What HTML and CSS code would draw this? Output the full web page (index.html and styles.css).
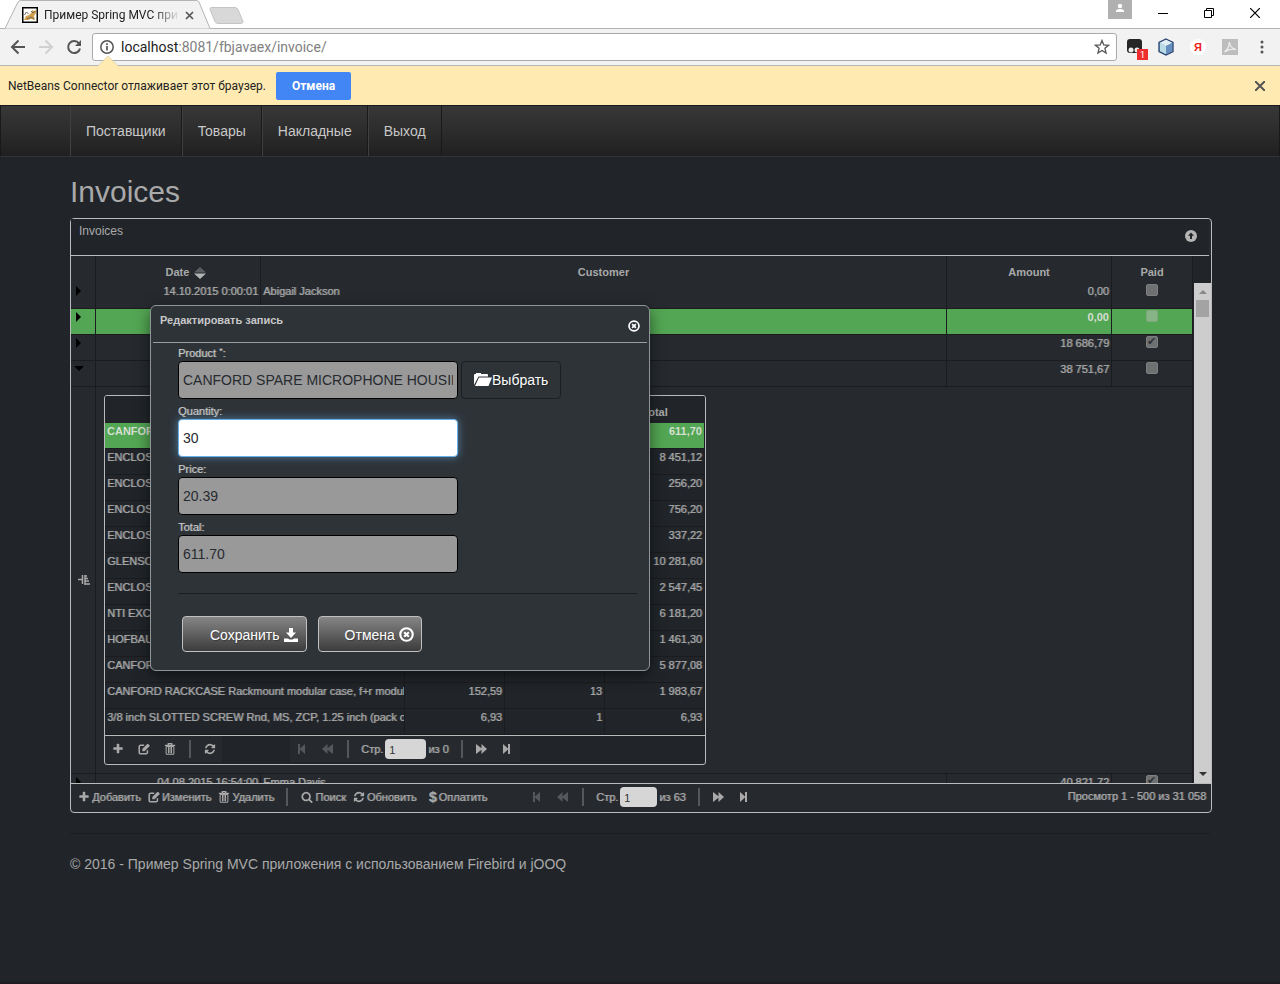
FILE: index.html
```html
<!DOCTYPE html>
<html lang="ru">
<head>
<meta charset="utf-8">
<title>Пример Spring MVC приложения</title>
<link rel="stylesheet" href="styles.css">
</head>
<body>
<svg class="defs" aria-hidden="true">
  <symbol id="plus" viewBox="0 0 1792 1792"><path d="M1600 736v192q0 40-28 68t-68 28h-416v416q0 40-28 68t-68 28h-192q-40 0-68-28t-28-68v-416h-416q-40 0-68-28t-28-68v-192q0-40 28-68t68-28h416v-416q0-40 28-68t68-28h192q40 0 68 28t28 68v416h416q40 0 68 28t28 68z"/></symbol>
  <symbol id="edit" viewBox="0 0 14 14"><path d="M11 8.500V11a1.600 1.600 0 0 1-1.600 1.600H3A1.600 1.600 0 0 1 1.400 11V4.300A1.600 1.600 0 0 1 3 2.700h4.200" fill="none" stroke="currentColor" stroke-width="1.800"/><path d="M5 9.600V7l5.800-5.800a.8.8 0 0 1 1.100 0l1.500 1.500a.8.8 0 0 1 0 1.100L7.600 9.600z"/></symbol>
  <symbol id="trash" viewBox="0 0 14 14"><path d="M5 2V.8h4V2M1 2.700h12" fill="none" stroke="currentColor" stroke-width="1.500"/><path d="M2.500 4v8.200q0 1 1 1h7q1 0 1-1V4M5.200 4.500V12M7 4.500V12M8.800 4.500V12M2.500 4.200h9" fill="none" stroke="currentColor" stroke-width="1.200"/></symbol>
  <symbol id="refresh" viewBox="0 0 1792 1792"><path d="M1639 1056q0 5-1 7-64 268-268 434.500t-478 166.500q-146 0-282.500-55t-243.500-157l-129 129q-19 19-45 19t-45-19-19-45v-448q0-26 19-45t45-19h448q26 0 45 19t19 45-19 45l-137 137q71 66 161 102t187 36q134 0 250-65t186-179q11-17 53-117 8-23 30-23h192q13 0 22.500 9.500t9.500 22.500zm25-800v448q0 26-19 45t-45 19h-448q-26 0-45-19t-19-45 19-45l138-138q-148-137-349-137-134 0-250 65t-186 179q-11 17-53 117-8 23-30 23h-199q-13 0-22.500-9.500t-9.500-22.500v-7q65-268 270-434.500t480-166.500q146 0 284 55.500t245 156.500l130-129q19-19 45-19t45 19 19 45z"/></symbol>
  <symbol id="search" viewBox="0 0 1792 1792"><path d="M1216 832q0-185-131.500-316.500t-316.500-131.500-316.500 131.500-131.500 316.500 131.500 316.500 316.500 131.500 316.500-131.500 131.500-316.500zm512 832q0 52-38 90t-90 38q-54 0-90-38l-343-342q-179 124-399 124-143 0-273.500-55.500t-225-150-150-225-55.500-273.500 55.500-273.500 150-225 225-150 273.500-55.500 273.500 55.500 225 150 150 225 55.500 273.500q0 220-124 399l343 343q37 37 37 90z"/></symbol>
  <symbol id="first" viewBox="0 0 12 12"><path d="M2 1h2v4.500L9 1v10L4 6.500V11H2z"/></symbol>
  <symbol id="prev" viewBox="0 0 12 12"><path d="M0 6l5.500-5v4.200L11 1v10L5.500 6.800V11z"/></symbol>
  <symbol id="next" viewBox="0 0 12 12"><path d="M12 6L6.500 1v4.200L1 1v10l5.500-4.200V11z"/></symbol>
  <symbol id="last" viewBox="0 0 12 12"><path d="M10 1H8v4.500L3 1v10l5-4.500V11h2z"/></symbol>
  <symbol id="cross-circle" viewBox="0 0 14 14"><circle cx="7" cy="7" r="5.800" fill="none" stroke="currentColor" stroke-width="2"/><path d="M4.800 4.800l4.400 4.400M9.200 4.800L4.800 9.200" stroke="currentColor" stroke-width="2"/></symbol>
</svg>

<header class="browser">
  <div class="tabs">
    <svg class="tab-shape" viewBox="0 0 250 29" aria-hidden="true"><path d="M0 28.500H5L18 2Q19 .5 21 .5H196Q198 .5 199 2L210 28.500H250" fill="#f2f2f2" stroke="#b4b4b4"/><path d="M211 7.500h24q2 0 3 2l5 12q0 2-2 2h-23q-2 0-3-2l-5-12q0-2 1-2z" fill="#d8d8d8" stroke="#c4c4c4"/></svg>
    <div class="tab">
      <svg class="favicon" viewBox="0 0 16 16" aria-hidden="true"><path d="M.75.75h14.500v14.500H.75z" fill="#fff" stroke="#000" stroke-width="1.500"/><path d="M2 13l2-4 3-1 3-3V3l2 1 2-1v3l-2 3 1 4-4-1-3 1z" fill="#d2a04c"/><path d="M2.500 8l2-3 2 2M9 4l2 2 2-2M5 12l4-2 3 2" fill="none" stroke="#6f665c"/></svg>
      <span class="tab-title">Пример Spring MVC при</span>
      <button class="bare" aria-label="Закрыть вкладку"><svg width="9" height="9" viewBox="0 0 9 9"><path d="M1 1l7 7M8 1L1 8" stroke="#555" stroke-width="1.700"/></svg></button>
    </div>
    <div class="window-controls">
      <button class="bare user" aria-label="Профиль"><svg width="24" height="19" viewBox="0 0 24 19"><path d="M0 0h24v19H0z" fill="#b0b0b0"/><circle cx="12" cy="6" r="2.200" fill="#fff"/><path d="M8 12v-1q0-2 4-2t4 2v1z" fill="#fff"/></svg></button>
      <button class="bare" aria-label="Свернуть"><svg width="10" height="10" viewBox="0 0 10 10"><path d="M0 5.500h10" stroke="#000"/></svg></button>
      <button class="bare" aria-label="Восстановить"><svg width="10" height="10" viewBox="0 0 10 10"><path d="M.5 2.500h7v7h-7zM2.500 2V.5h7v7H8" fill="none" stroke="#000"/></svg></button>
      <button class="bare" aria-label="Закрыть"><svg width="10" height="10" viewBox="0 0 10 10"><path d="M0 0l10 10M10 0L0 10" stroke="#000" stroke-width="1.200"/></svg></button>
    </div>
  </div>
  <div class="toolbar">
    <div class="history">
      <button class="bare" aria-label="Назад"><svg width="16" height="16" viewBox="0 0 16 16"><path d="M15 8H3M8.500 1.500L2 8l6.500 6.500" fill="none" stroke="#555" stroke-width="2"/></svg></button>
      <button class="bare" aria-label="Вперёд"><svg width="16" height="16" viewBox="0 0 16 16"><path d="M1 8h12M7.500 1.500L14 8l-6.500 6.500" fill="none" stroke="#d0d0d0" stroke-width="2"/></svg></button>
      <button class="bare" aria-label="Обновить страницу"><svg width="16" height="16" viewBox="0 0 16 16"><path d="M13 4.500A6 6 0 1 0 14 9.500" fill="none" stroke="#555" stroke-width="2"/><path d="M15 1v6H9z" fill="#555"/></svg></button>
    </div>
    <div class="address">
      <svg width="14" height="14" viewBox="0 0 14 14" aria-hidden="true"><circle cx="7" cy="7" r="6.200" fill="none" stroke="#555" stroke-width="1.500"/><path d="M7 6v4.500M7 3.200v1.700" stroke="#555" stroke-width="1.700"/></svg>
      <span class="url"><b>localhost</b>:8081/fbjavaex/invoice/</span>
      <svg width="16" height="16" viewBox="0 0 16 16" aria-hidden="true"><path d="M8 1.500l1.800 4.400 4.700.4-3.600 3 1.200 4.700L8 11.500 3.900 14l1.200-4.700-3.600-3 4.700-.4z" fill="none" stroke="#555" stroke-width="1.300"/></svg>
    </div>
    <div class="extensions">
      <svg width="22" height="22" viewBox="0 0 22 22" aria-hidden="true"><rect x="1" y="3" width="15" height="14" rx="3" fill="#262626"/><circle cx="5" cy="14" r="2.500" fill="#eee"/><circle cx="11" cy="14" r="2.500" fill="#eee"/><path d="M11 13h11v11H11z" fill="#ee2f2f"/><text x="14" y="22" class="badge">1</text></svg>
      <svg width="16" height="18" viewBox="0 0 16 18" aria-hidden="true"><path d="M8 1l7 3.500v9L8 17l-7-3.500v-9z" fill="#8db8d8" stroke="#27406e" stroke-width="1.300"/><path d="M8 1.800l6 3L8 8 2 4.800z" fill="#e1eff4"/><path d="M8 8l6-3v8l-6 3z" fill="#668fc0"/><path d="M2 5l6 3v8l-6-3z" fill="#b9dce5"/></svg>
      <svg width="16" height="16" viewBox="0 0 16 16" aria-hidden="true"><circle cx="8" cy="8" r="8" fill="#fff"/><text x="4" y="12" class="ya">Я</text></svg>
      <svg width="16" height="16" viewBox="0 0 16 16" aria-hidden="true"><path d="M0 0h16v16H0z" fill="#bdbdbd"/><path d="M2.500 13q5-4 4.800-10 1 6 6.500 7.500-6-1.500-11.300 2.500z" fill="none" stroke="#eee" stroke-width="1.300"/></svg>
      <svg width="4" height="14" viewBox="0 0 4 14" aria-hidden="true"><g fill="#555"><circle cx="2" cy="2" r="1.500"/><circle cx="2" cy="7" r="1.500"/><circle cx="2" cy="12" r="1.500"/></g></svg>
    </div>
  </div>
  <div class="infobar">
    <svg class="notch" width="20" height="10" viewBox="0 0 20 10" aria-hidden="true"><path d="M0 10L10 0l10 10z" fill="#ffebb2"/><path d="M0 9.500L10 0l10 9.500" fill="none" stroke="#d8ccaa" stroke-width=".7"/></svg>
    <span>NetBeans Connector отлаживает этот браузер.</span>
    <button class="info-cancel">Отмена</button>
    <button class="bare info-close" aria-label="Закрыть сообщение"><svg width="10" height="10" viewBox="0 0 10 10"><path d="M0 0l10 10M10 0L0 10" stroke="#555" stroke-width="2"/></svg></button>
  </div>
</header>

<nav class="navbar">
  <a href="#">Поставщики</a><a href="#">Товары</a><a href="#">Накладные</a><a href="#">Выход</a>
</nav>

<main class="container">
  <h1>Invoices</h1>
  <section class="panel">
    <div class="caption"><span>Invoices</span>
      <button class="bare" aria-label="Свернуть таблицу"><svg width="12" height="12" viewBox="0 0 12 12"><circle cx="6" cy="6" r="6" fill="#b4b4b4"/><path d="M6 2.500l3 3.300H7V9H5V5.800H3z" fill="#212529"/></svg></button>
    </div>
    <div class="grid-head">
      <table class="grid">
        <colgroup><col class="c-arrow"><col class="c-date"><col><col class="c-date"><col class="c-paid"></colgroup>
        <thead><tr><th></th><th class="sorted">Date <svg class="sort" width="12" height="12" viewBox="0 0 12 12" aria-hidden="true"><path d="M6 0l6 5.500H0z" fill="#5c5f62"/><path d="M0 6.500h12L6 12z" fill="#b4b4b4"/></svg></th><th>Customer</th><th>Amount</th><th>Paid</th></tr></thead>
      </table>
    </div>
    <div class="grid-body">
      <table class="grid">
        <colgroup><col class="c-arrow"><col class="c-date"><col><col class="c-date"><col class="c-paid"></colgroup>
        <tbody>
          <tr><td><i class="right"></i></td><td class="num">14.10.2015 0:00:01</td><td>Abigail Jackson</td><td class="num">0,00</td><td class="mid"><input type="checkbox" disabled aria-label="Paid"></td></tr>
          <tr class="selected"><td><i class="right"></i></td><td></td><td></td><td class="num">0,00</td><td class="mid"><input type="checkbox" disabled aria-label="Paid"></td></tr>
          <tr><td><i class="right"></i></td><td></td><td></td><td class="num">18 686,79</td><td class="mid"><input type="checkbox" checked disabled aria-label="Paid"></td></tr>
          <tr><td><i class="down"></i></td><td></td><td></td><td class="num">38 751,67</td><td class="mid"><input type="checkbox" disabled aria-label="Paid"></td></tr>
          <tr class="detail">
            <td><svg width="12" height="12" viewBox="0 0 12 12" aria-hidden="true"><path d="M0 5.500h4M4.500 1v9M7 1v10M7 2h2M7 4.500h3M7 7h4M7 10h5" fill="none" stroke="#a9a9a9" stroke-width="1.500"/></svg></td>
            <td colspan="4">
              <div class="subgrid">
                <table class="grid sub">
                  <colgroup><col><col class="c-sub"><col class="c-sub"><col class="c-sub"></colgroup>
                  <thead><tr><th>Product</th><th>Price</th><th>Quantity</th><th>Total</th></tr></thead>
                  <tbody>
                    <tr class="selected"><td>CANFORD SPARE MICROPHONE HOUSING</td><td class="num">20,39</td><td class="num">30</td><td class="num">611,70</td></tr>
                    <tr><td>ENCLOSURE</td><td></td><td></td><td class="num">8 451,12</td></tr>
                    <tr><td>ENCLOSURE</td><td></td><td></td><td class="num">256,20</td></tr>
                    <tr><td>ENCLOSURE</td><td></td><td></td><td class="num">756,20</td></tr>
                    <tr><td>ENCLOSURE</td><td></td><td></td><td class="num">337,22</td></tr>
                    <tr><td>GLENSOUND</td><td></td><td></td><td class="num">10 281,60</td></tr>
                    <tr><td>ENCLOSURE</td><td></td><td></td><td class="num">2 547,45</td></tr>
                    <tr><td>NTI EXCEL</td><td></td><td></td><td class="num">6 181,20</td></tr>
                    <tr><td>HOFBAUER</td><td></td><td></td><td class="num">1 461,30</td></tr>
                    <tr><td>CANFORD</td><td></td><td></td><td class="num">5 877,08</td></tr>
                    <tr><td>CANFORD RACKCASE Rackmount modular case, f+r module</td><td class="num">152,59</td><td class="num">13</td><td class="num">1 983,67</td></tr>
                    <tr><td>3/8 inch SLOTTED SCREW Rnd, MS, ZCP, 1.25 inch (pack o</td><td class="num">6,93</td><td class="num">1</td><td class="num">6,93</td></tr>
                  </tbody>
                </table>
                <div class="sub-pager">
                  <div class="sub-tools">
                    <button class="bare" aria-label="Добавить позицию"><svg class="ico"><use href="#plus"/></svg></button>
                    <button class="bare" aria-label="Изменить позицию"><svg class="ico"><use href="#edit"/></svg></button>
                    <button class="bare" aria-label="Удалить позицию"><svg class="ico"><use href="#trash"/></svg></button>
                    <span class="sep"></span>
                    <button class="bare" aria-label="Обновить позиции"><svg class="ico"><use href="#refresh"/></svg></button>
                  </div>
                  <div class="pages">
                    <button class="bare off" aria-label="Первая"><svg class="ico"><use href="#first"/></svg></button>
                    <button class="bare off" aria-label="Предыдущая"><svg class="ico"><use href="#prev"/></svg></button>
                    <span class="sep"></span>
                    <label>Стр. <input class="page-wide" type="text" value="1"> из 0</label>
                    <span class="sep"></span>
                    <button class="bare" aria-label="Следующая"><svg class="ico"><use href="#next"/></svg></button>
                    <button class="bare" aria-label="Последняя"><svg class="ico"><use href="#last"/></svg></button>
                  </div>
                </div>
              </div>
            </td>
          </tr>
          <tr><td><i class="right"></i></td><td class="num">04.08.2015 16:54:00</td><td>Emma Davis</td><td class="num">40 821,72</td><td class="mid"><input type="checkbox" checked disabled aria-label="Paid"></td></tr>
        </tbody>
      </table>
      <div class="scrollbar"><i class="up"></i><span class="thumb"></span><i class="dn"></i></div>
    </div>
    <div class="pager">
      <div class="tools">
        <button class="bare"><svg class="ico"><use href="#plus"/></svg>Добавить</button>
        <button class="bare"><svg class="ico"><use href="#edit"/></svg>Изменить</button>
        <button class="bare"><svg class="ico"><use href="#trash"/></svg>Удалить</button>
        <span class="sep"></span>
        <button class="bare"><svg class="ico"><use href="#search"/></svg>Поиск</button>
        <button class="bare"><svg class="ico"><use href="#refresh"/></svg>Обновить</button>
        <button class="bare"><b class="dollar">$</b>Оплатить</button>
      </div>
      <div class="pages">
        <button class="bare off" aria-label="Первая страница"><svg class="ico"><use href="#first"/></svg></button>
        <button class="bare off" aria-label="Предыдущая страница"><svg class="ico"><use href="#prev"/></svg></button>
        <span class="sep"></span>
        <label>Стр. <input type="text" value="1"> из 63</label>
        <span class="sep"></span>
        <button class="bare" aria-label="Следующая страница"><svg class="ico"><use href="#next"/></svg></button>
        <button class="bare" aria-label="Последняя страница"><svg class="ico"><use href="#last"/></svg></button>
      </div>
      <span class="records">Просмотр 1 - 500 из 31 058</span>
    </div>

    <div class="dialog" role="dialog" aria-labelledby="dialog-title">
      <div class="dialog-head"><span id="dialog-title">Редактировать запись</span>
        <button class="bare" aria-label="Закрыть окно"><svg width="12" height="12"><use href="#cross-circle"/></svg></button>
      </div>
      <form class="dialog-form">
        <div class="field"><label for="product">Product <sup>*</sup>:</label>
          <div class="row"><input id="product" type="text" value="CANFORD SPARE MICROPHONE HOUSING" readonly>
          <button type="button" class="choose"><svg width="18" height="14" viewBox="0 0 18 14" aria-hidden="true"><path d="M0 12V2q0-1 1-1h1V0h5v1h6q1 0 1 1v1.500H4.500z" fill="#fff"/><path d="M5 4.500h13L14.500 13H1z" fill="#fff"/></svg>Выбрать</button></div>
        </div>
        <div class="field"><label for="quantity">Quantity:</label><input id="quantity" class="focused" type="text" value="30"></div>
        <div class="field"><label for="price">Price:</label><input id="price" type="text" value="20.39" readonly></div>
        <div class="field"><label for="total">Total:</label><input id="total" type="text" value="611.70" readonly></div>
        <hr>
        <div class="actions">
          <button type="button">Сохранить<svg width="14" height="14" viewBox="0 0 14 14" aria-hidden="true"><path d="M5 0h4v4.500h3L7 10 2 4.500h3zM0 10.500h4l1.500 1h3l1.500-1h4V14H0z" fill="#fff"/></svg></button>
          <button type="button" class="cancel">Отмена<svg width="15" height="15" aria-hidden="true"><use href="#cross-circle"/></svg></button>
        </div>
      </form>
    </div>
  </section>
  <footer>© 2016 - Пример Spring MVC приложения с использованием Firebird и jOOQ</footer>
</main>
</body>
</html>
```
FILE: styles.css
```css
* { box-sizing: border-box; }

body {
  margin: 0;
  min-height: 100vh;
  background: #212529;
  border-bottom: 2px solid #1f1a1f;
  color: #a9a9a9;
  font: 14px/20px "Liberation Sans", Arial, sans-serif;
}

.defs { position: absolute; width: 0; height: 0; }
svg { display: block; flex: none; }

.bare {
  display: flex;
  align-items: center;
  padding: 0;
  border: 0;
  background: none;
  color: inherit;
  font: inherit;
  text-shadow: inherit;
}

/* Browser window */
.browser { color: #222; font: 12px/16px Roboto, "Noto Sans", sans-serif; }

.tabs {
  position: relative;
  display: flex;
  justify-content: space-between;
  height: 29px;
  background: linear-gradient(#b4b4b4, #b4b4b4) 0 28px / 100% 1px no-repeat #fff;
}
.tab-shape { position: absolute; left: 0; top: 0; width: 250px; height: 29px; }
.tab {
  position: relative;
  display: flex;
  align-items: center;
  width: 194px;
  padding: 1px 0 0 22px;
}
.favicon { width: 16px; height: 16px; }
.tab-title {
  flex: 1;
  margin: 0 5px 0 6px;
  white-space: nowrap;
  mask-image: linear-gradient(90deg, #000 80%, transparent);
}
.window-controls { display: flex; gap: 36px; margin-right: 20px; height: 26px; }
.window-controls .user { align-items: flex-start; margin-right: -10px; }

.toolbar {
  display: flex;
  align-items: center;
  height: 37px;
  padding: 0 16px 0 10px;
  background: #f2f2f2;
  border-bottom: 1px solid #b4b4b4;
}
.history { display: flex; gap: 12px; width: 82px; }
.address {
  flex: 1;
  display: flex;
  align-items: center;
  gap: 7px;
  height: 28px;
  padding: 0 6px 0 7px;
  background: #fff;
  border: 1px solid #aaa;
  border-radius: 3px;
}
.url { flex: 1; color: #808080; font-size: 14px; }
.url b { color: #222; font-weight: 400; }
.extensions { display: flex; align-items: center; gap: 16px; margin-left: 9px; }
.extensions > svg:first-child { overflow: visible; margin-right: -6px; }
.extensions > svg:last-child { margin-left: 6px; }
.badge { fill: #fff; font-size: 9px; }
.ya { fill: #e22; font: bold 11px "Liberation Sans", sans-serif; }

.infobar {
  position: relative;
  display: flex;
  align-items: center;
  height: 39px;
  padding: 0 15px 0 8px;
  background: #ffebb2;
}
.infobar > span { min-width: 253px; }
.notch { position: absolute; left: 98px; top: -10px; }
.info-cancel {
  width: 75px;
  height: 28px;
  margin-left: 10px;
  background: #4285f4;
  border: 0;
  border-radius: 2px;
  color: #fff;
  font: bold 12px/16px Roboto, sans-serif;
}
.info-close { margin-left: auto; }

/* Page */
.navbar {
  display: flex;
  height: 52px;
  padding-left: 69px;
  background: linear-gradient(#383838, #202020);
  border: 1px solid #17191b;
  border-bottom-color: #303438;
}
.navbar a {
  padding: 15px;
  border-left: 1px solid #404040;
  border-right: 1px solid #191919;
  color: #c8c8c8;
  text-decoration: none;
}

.container { max-width: 1172px; margin: 0 auto; padding: 0 14px 0 16px; }
h1 { margin: 17px 0 8px; font-size: 30px; line-height: 36px; font-weight: 400; }

.panel {
  position: relative;
  background: #26292e;
  border: 1px solid #b9bbbc;
  border-radius: 4px;
  font-size: 11px;
  line-height: 16px;
  text-shadow: 1px 0 0 rgba(169, 169, 169, .6);
}
.caption {
  display: flex;
  justify-content: space-between;
  height: 37px;
  margin-right: 2px;
  padding: 4px 12px 0 8px;
  border-bottom: 1px solid #b9bbbc;
  font-size: 12px;
  text-shadow: none;
}
.caption, .grid-head { background-color: #212529; }
.caption .bare { height: 26px; }

.grid {
  width: 100%;
  table-layout: fixed;
  border-spacing: 0;
  background: #26292e;
}
.c-arrow { width: 25px; }
.c-date { width: 165px; }
.c-paid { width: 81px; }
.c-sub { width: 100px; }
.grid th, .grid td {
  padding: 0 2px;
  border-right: 1px solid #1a1c1f;
  overflow: hidden;
  white-space: nowrap;
  text-align: left;
  vertical-align: top;
}
.grid th { height: 27px; padding-top: 5px; vertical-align: middle; text-align: center; text-shadow: none; }
.grid .sorted { padding-left: 18px; }
.grid td { height: 26px; border-bottom: 1px solid #1a1c1f; }
.grid .num { text-align: right; }
.grid .mid { text-align: center; }
.grid tr.selected td { background: #53a653; color: #d5dfd2; font-weight: 700; text-shadow: none; }
.grid-head { padding-right: 18px; }
.sort { display: inline-block; margin-left: 2px; vertical-align: -3px; }

.grid i { display: block; width: 0; height: 0; }
.right { margin: 3px 0 0 3px; border: 5px solid transparent; border-left-color: #000; border-right-width: 0; }
.down { margin: 5px 0 0 1px; border: 5px solid transparent; border-top-color: #000; border-bottom-width: 0; }

.grid input[type="checkbox"] {
  appearance: none;
  display: block;
  width: 12px;
  height: 12px;
  margin: 1px auto 0;
  background: #6e7072;
  border: 1px solid #7c7e80;
  border-radius: 2px;
}
.grid .selected input[type="checkbox"] { background: #86b486; border-color: #7aa87a; }
.grid input:checked::after {
  content: "✔";
  display: block;
  color: #303336;
  font: 11px/10px "DejaVu Sans", sans-serif;
  text-shadow: none;
}

.grid-body { display: flex; gap: 1px; height: 500px; overflow: hidden; background: #212529; }
.grid-body > .grid { flex: 1; width: auto; height: max-content; }
.scrollbar {
  display: flex;
  flex-direction: column;
  align-items: center;
  width: 17px;
  background: #cdcdcd;
}
.scrollbar i { width: 0; height: 0; border: 4px solid transparent; }
.scrollbar .up { margin-top: 3px; border-bottom-color: #888; }
.thumb { width: 13px; height: 17px; margin-top: 6px; background: #a3a3a3; }
.scrollbar .dn { margin: auto 0 3px; border-top-color: #333; }

.grid .detail > td { padding: 8px; }
.grid .detail > td:first-child { padding: 0 0 0 7px; vertical-align: middle; }
.subgrid { width: 602px; border: 1px solid #b9bbbc; border-radius: 3px; background: #212529; overflow: hidden; }
.sub { background: #212529; }
.grid.sub th { border-right: 0; }

.ico { width: 12px; height: 12px; fill: currentColor; }
.sep { width: 2px; height: 18px; background: #55585b; }
.off { color: #55585b; }

.sub-pager { display: flex; height: 29px; padding-bottom: 2px; border-top: 1px solid #b9bbbc; }
.sub-tools, .pages { display: flex; align-items: center; gap: 13px; }
.sub-tools { width: 117px; padding-left: 7px; background: #26292e; }
.sub-tools .bare + .bare { margin-left: 1px; }
.sub-pager .pages { width: 230px; margin-left: 68px; padding-left: 6px; background: #26292e; }
.pages { gap: 12px; }
.pages label { display: flex; align-items: center; gap: 2px; }
.pages .off + .off { margin-left: 2px; }
.pages .off + .sep { margin-left: 1px; }
.pages .bare:last-child { margin-left: 1px; }
.pages input {
  width: 37px;
  height: 20px;
  padding: 2px 4px 0;
  background: #d6d6d6;
  border: 0;
  border-radius: 4px;
  color: #333;
  font: inherit;
}
.pages .page-wide { width: 41px; }

.pager { display: flex; height: 29px; padding: 0 5px 2px 7px; border-top: 1px solid #b9bbbc; }
.tools { display: flex; align-items: center; width: 453px; }
.tools .bare { gap: 2px; margin-right: 8px; }
.tools .bare + .bare { margin-left: -1px; }
.tools .sep { margin: 0 13px 0 4px; }
.dollar { width: 10px; padding-left: 2px; font-size: 14px; }
.tools .bare:last-child { margin-left: 2px; }
.records { margin-left: auto; padding-top: 4px; }

/* Edit dialog */
.dialog {
  position: absolute;
  left: 79px;
  top: 86px;
  width: 500px;
  padding: 0 2px;
  background: #2e3338;
  border: 1px solid #8f9496;
  border-radius: 6px;
  box-shadow: 0 5px 15px rgba(0, 0, 0, .5);
  color: #c8c8c8;
}
.dialog-head {
  display: flex;
  justify-content: space-between;
  height: 37px;
  padding: 6px 7px 0;
  border-bottom: 1px solid #9a9ea0;
  font-weight: 700;
  text-shadow: none;
}
.dialog-head .bare { height: 28px; color: #fff; }
.dialog-form { display: flex; flex-direction: column; gap: 4px; padding: 2px 10px 18px 25px; }
.field label { display: block; }
.field sup { font-size: 9px; line-height: 0; vertical-align: 3px; }
.row { display: flex; gap: 3px; }
.field input {
  display: block;
  width: 280px;
  height: 38px;
  padding: 0 4px;
  background: #999;
  border: 1px solid #000;
  border-radius: 4px;
  color: #272b30;
  font: 14px/20px "Liberation Sans", Arial, sans-serif;
  outline: 0;
}
.field .focused {
  background: #fff;
  border-color: #66afe9;
  box-shadow: 0 0 8px rgba(102, 175, 233, .6);
}
.choose, .actions button {
  display: flex;
  align-items: center;
  color: #fff;
  font: 14px/20px "Liberation Sans", Arial, sans-serif;
  text-shadow: 1px 1px 1px rgba(0, 0, 0, .3);
  border-radius: 4px;
}
.choose { padding: 0 12px; background: none; border: 1px solid #1c1e22; }
.dialog hr { width: 100%; margin: 16px 0 18px; border: 0; border-top: 1px solid #1c1e22; }
.actions { display: flex; gap: 11px; padding-left: 4px; }
.actions button {
  gap: 4px;
  height: 36px;
  padding: 1px 8px 0 27px;
  background: linear-gradient(#858585, #3c3c3c);
  border: 1px solid #c0c0c0;
}
.actions .cancel { padding: 1px 7px 0 26px; }

footer { margin: 20px 2px 0 0; padding-top: 20px; border-top: 1px solid #1a1c1f; }
```
